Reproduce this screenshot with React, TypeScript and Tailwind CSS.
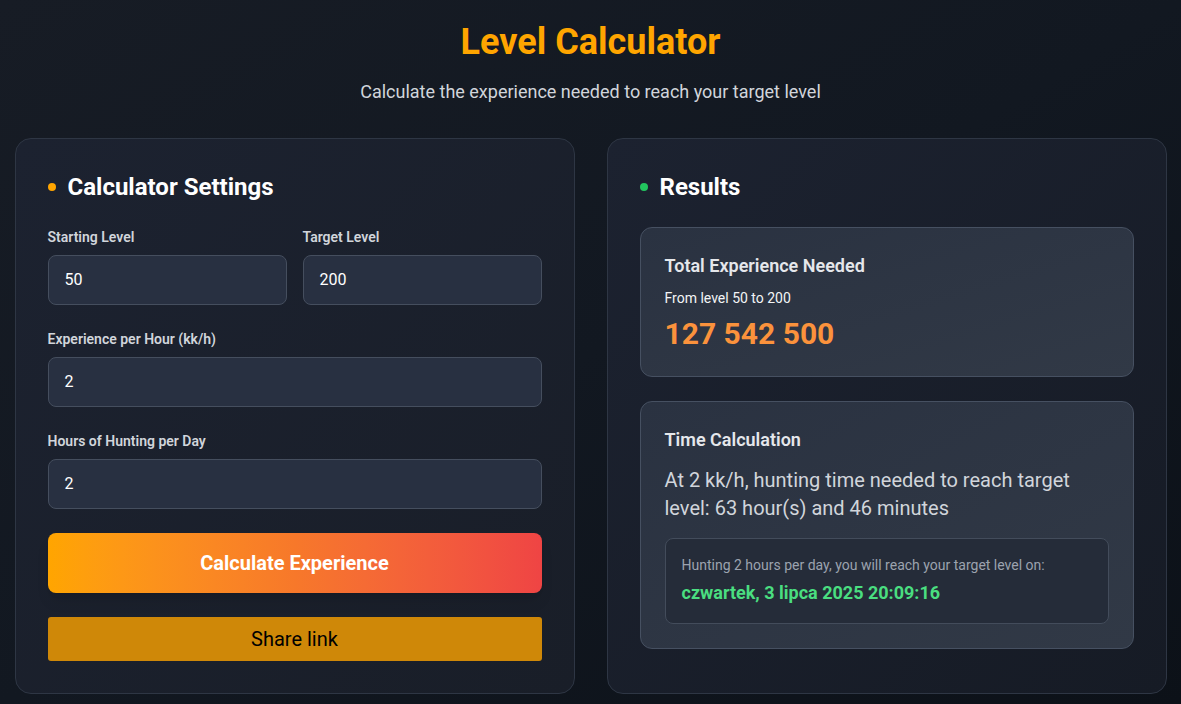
import React from "react";

export default function App() {
  return (
    <div
      className="min-h-[704px] w-full bg-gradient-to-br from-[#171c25] via-[#121821] to-[#0c1118] text-white"
      style={{ fontFamily: "Roboto, 'Noto Sans', sans-serif" }}
    >
      <div className="mx-auto max-w-[1152px] pt-[22px] pb-[10px]">
        <h1 className="text-center text-[36px] font-bold leading-[40px] text-[#ffa500] mb-4">
          Level Calculator
        </h1>
        <p className="text-center text-lg leading-7 text-[#d1d5db] mb-8">
          Calculate the experience needed to reach your target level
        </p>
        <div className="grid grid-cols-2 gap-8">
          {/* Left card */}
          <div className="rounded-2xl border border-[#2e3644] bg-gradient-to-br from-[#1c2230] to-[#191e28] p-8">
            <div className="mb-6 flex items-center gap-3">
              <span className="h-2 w-2 rounded-full bg-[#ffa500]" />
              <h2 className="text-2xl font-bold leading-8 text-white">Calculator Settings</h2>
            </div>
            <div className="grid grid-cols-2 gap-4 mb-6">
              <div>
                <label className="mb-2 block text-sm font-semibold leading-5 text-[#d1d5db]">Starting Level</label>
                <div className="flex h-[50px] items-center rounded-lg border border-[#454e5e] bg-[#283041] px-4 text-base text-white">50</div>
              </div>
              <div>
                <label className="mb-2 block text-sm font-semibold leading-5 text-[#d1d5db]">Target Level</label>
                <div className="flex h-[50px] items-center rounded-lg border border-[#454e5e] bg-[#283041] px-4 text-base text-white">200</div>
              </div>
            </div>
            <div className="mb-6">
              <label className="mb-2 block text-sm font-semibold leading-5 text-[#d1d5db]">Experience per Hour (kk/h)</label>
              <div className="flex h-[50px] items-center rounded-lg border border-[#454e5e] bg-[#283041] px-4 text-base text-white">2</div>
            </div>
            <div className="mb-6">
              <label className="mb-2 block text-sm font-semibold leading-5 text-[#d1d5db]">Hours of Hunting per Day</label>
              <div className="flex h-[50px] items-center rounded-lg border border-[#454e5e] bg-[#283041] px-4 text-base text-white">2</div>
            </div>
            <button className="mb-6 flex h-[60px] w-full items-center justify-center rounded-lg bg-gradient-to-r from-[#ffa500] via-[#f7782a] to-[#ef4444] text-xl font-bold text-white shadow-lg">
              Calculate Experience
            </button>
            <button className="flex h-[44px] w-full items-center justify-center rounded-[3px] bg-[#cf8808] text-xl text-black">
              Share link
            </button>
          </div>

          {/* Right card */}
          <div className="rounded-2xl border border-[#2e3644] bg-gradient-to-br from-[#1c2230] to-[#161b25] p-8">
            <div className="mb-6 flex items-center gap-3">
              <span className="h-2 w-2 rounded-full bg-[#22c55e]" />
              <h2 className="text-2xl font-bold leading-8 text-white">Results</h2>
            </div>
            <div className="mb-6 rounded-xl border border-[#465061] bg-gradient-to-br from-[#2a3241] to-[#313946] p-6">
              <h3 className="mb-2 text-lg font-semibold leading-7 text-[#e5e7eb]">Total Experience Needed</h3>
              <p className="mb-2 text-sm leading-5 text-[#f3f4f6]">From level 50 to 200</p>
              <p className="text-3xl font-bold leading-9 text-[#fb923c]">127 542 500</p>
            </div>
            <div className="rounded-xl border border-[#465061] bg-gradient-to-br from-[#2a3241] to-[#313946] p-6">
              <h3 className="mb-3 text-lg font-semibold leading-7 text-[#e5e7eb]">Time Calculation</h3>
              <p className="max-w-[425px] text-xl leading-7 text-[#d1d5db]">
                At 2 kk/h, hunting time needed to reach target level: 63 hour(s) and 46 minutes
              </p>
              <div className="mt-4 rounded-lg border border-[#434c5b] bg-[#252c39] p-4">
                <p className="text-sm leading-5 text-[#9ca3af]">
                  Hunting 2 hours per day, you will reach your target level on:
                </p>
                <p className="mt-1 text-lg font-bold leading-7 text-[#4ade80]">
                  czwartek, 3 lipca 2025 20:09:16
                </p>
              </div>
            </div>
          </div>
        </div>
      </div>
    </div>
  );
}
